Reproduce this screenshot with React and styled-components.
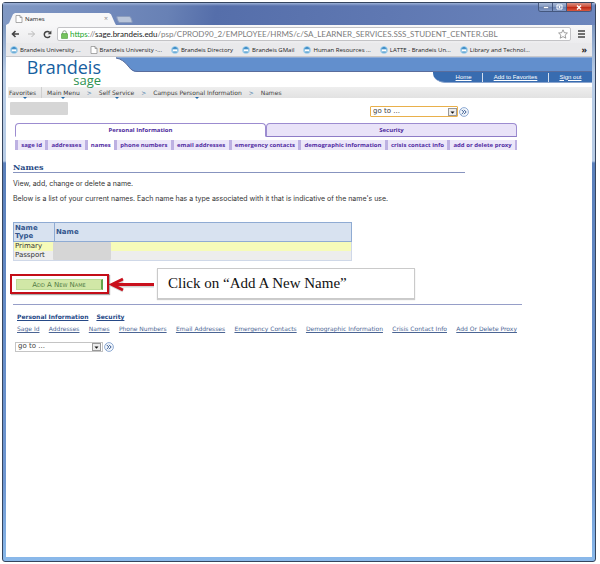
import React from "react";
import styled, { createGlobalStyle, css } from "styled-components";

const GlobalStyle = createGlobalStyle`
  * { box-sizing: border-box; }
  html, body { margin: 0; background: #fff; }
  body { font-family: "DejaVu Sans", Verdana, sans-serif; font-size: 7px; line-height: 9px; color: #333; }
  button, select, input { font: inherit; color: inherit; margin: 0; padding: 0; border: 0; border-radius: 0; background: none; }
  a { color: inherit; }
  svg { display: block; flex: none; }
`;

const Window = styled.div`
  display: flex;
  flex-direction: column;
  min-height: calc(100vh - 4px);
  margin: 2px 4px 2px 2px;
  padding: 0 3px 4px;
  border: 1px solid #35455f;
  border-radius: 3px;
  background: linear-gradient(180deg, #6380ae 0, #b8cce6 70px, #b8cce6 158px, #5b80bb 160px, #6f97d2 480px, #8ab9ea 100%);
`;

const TitleBar = styled.header`
  display: flex;
  align-items: flex-end;
  height: 22px;
  margin: 0 -3px;
  padding: 0 3px;
  background: linear-gradient(180deg, #9db2d8 0, transparent 3px),
    linear-gradient(100deg, #8199c4 0, #7189bb 18%, #6881b5 28%, #556eaa 36%, #5f78b2 65%, #6c86bd 100%);
`;

const BrowserTab = styled.div`
  display: flex;
  align-items: center;
  gap: 2px;
  width: 110px;
  height: 12px;
  padding: 0 8px 0 9px;
  background: #f7f7f8;
  clip-path: polygon(0 100%, 3px 85%, 7px 10%, 9px 0, 103px 0, 105px 10%, 109px 85%, 110px 100%);
  font: 6px/9px "Open Sans", sans-serif;
  color: #222;
`;

const TabClose = styled.button`
  margin-left: auto;
  font-size: 7px;
  line-height: 8px;
  color: #888;
`;

const NewTab = styled.button`
  width: 15px;
  height: 7px;
  margin: 0 0 2px 1px;
  border-radius: 2px;
  transform: skewX(20deg);
  border: 1px solid #8b9cbd;
  background: #b9c5da;
`;

const WindowControls = styled.div`
  display: flex;
  align-self: flex-start;
  width: 54px;
  height: 9px;
  margin-left: auto;
  border: 1px solid #44577e;
  border-top: 0;
  border-radius: 0 0 3px 3px;
  overflow: hidden;
`;

const ControlButton = styled.button`
  display: flex;
  align-items: center;
  justify-content: center;
  flex: ${({ $close }) => ($close ? 25 : 14)};
  border-right: ${({ $close }) => ($close ? 0 : "1px solid #44577e")};
  background: ${({ $close }) =>
    $close
      ? "linear-gradient(#d99184, #cd4a34 50%, #bd2a16 55%, #d8593f)"
      : "linear-gradient(#a9bad7, #7f96bf 50%, #6880b0 55%, #8198c4)"};
`;

const Toolbar = styled.div`
  display: flex;
  align-items: center;
  height: 18px;
  padding: 0 7px 0 5px;
  gap: 7px;
  background: linear-gradient(#f7f7f8, #ececee);
`;

const IconButton = styled.button`
  display: flex;
  align-items: center;
`;

const AddressBar = styled.form`
  display: flex;
  align-items: center;
  flex: 1;
  min-width: 0;
  height: 14px;
  margin-left: -2px;
  padding: 0 2px 0 3px;
  gap: 2px;
  background: #fff;
  border: 1px solid #c3c3c6;
  border-radius: 2px;
`;

const Url = styled.div`
  flex: 1;
  min-width: 0;
  font: 8px/12px Lato, sans-serif;
  white-space: nowrap;
  overflow: hidden;
  color: #7c7c7c;
  & > b { font-weight: 400; color: #222; }
  & > em { font-style: normal; color: #1ba62a; }
`;

const Bookmarks = styled.nav`
  display: flex;
  align-items: center;
  height: 14px;
  padding: 0 5px 0 4px;
  gap: 9px;
  background: #e9e9eb;
  border-bottom: 1px solid #c9c9cc;
  font: 6px/10px "Open Sans", sans-serif;
  color: #222;
`;

const Bookmark = styled.a`
  display: flex;
  align-items: center;
  gap: 2px;
  white-space: nowrap;
  text-decoration: none;
`;

const MoreBookmarks = styled.button`
  margin-left: auto;
  font-size: 9px;
  line-height: 8px;
  font-weight: 700;
`;

const Page = styled.div`
  flex: 1;
  background: #fff;
`;

const PageHeader = styled.div`
  display: flex;
  height: 30px;
`;

const Logo = styled.div`
  display: flex;
  flex-direction: column;
  align-items: flex-end;
  width: 95px;
  flex: none;
  padding-top: 1px;
  font-family: "Open Sans", sans-serif;
  color: #17609f;
  font-size: 18px;
  line-height: 18px;
  & > span { font-size: 13px; line-height: 8px; color: #2e9150; }
`;

const HeaderRight = styled.div`
  display: flex;
  flex-direction: column;
  align-items: flex-end;
  flex: 1;
  min-width: 0;
  margin-left: 15px;
`;

const Band = styled.div`
  display: flex;
  width: 100%;
  height: 15px;
  &::after {
    content: "";
    flex: 1;
    background: #628fcd;
    border-top: 1px solid #8cabd8;
    border-bottom: 1px solid #5a6d9c;
  }
`;

const UserLinks = styled.nav`
  display: flex;
  align-items: center;
  width: 159px;
  height: 11px;
  background: #386cb0;
  border-bottom: 1px solid #8ca6cf;
  border-bottom-left-radius: 12px 10px;
  padding-left: 12px;
  font: 6px/9px "Liberation Sans", Arial, sans-serif;
  color: #fff;
  & > a { flex: 1 1 auto; text-align: center; white-space: nowrap; }
  & > a + a { border-left: 1px solid #d5e0ef; }
`;

const Breadcrumb = styled.nav`
  display: flex;
  align-items: center;
  height: 11px;
  margin-left: 2px;
  padding-left: 1px;
  background: linear-gradient(#eee, #e2e2e2);
  font-size: 6px;
  color: #3c3c3c;
  & > i { font-style: normal; width: 19px; text-align: center; color: #3b74a6; }
`;

const Crumb = styled.button`
  position: relative;
  height: 11px;
  white-space: nowrap;
  ${({ $divided }) => $divided && css`
    padding-right: 5px;
    margin-right: 5px;
    border-right: 1px solid #cfcfcf;
  `}
  ${({ $menu }) => $menu && css`
    &::after {
      content: "";
      position: absolute;
      left: calc(50% - 2px);
      bottom: -1px;
      border: 2px solid transparent;
      border-top-color: #1f68a9;
      border-bottom: 0;
    }
  `}
`;

const TopRow = styled.div`
  display: flex;
  justify-content: space-between;
  height: 25px;
  padding: 4px 123px 0 4px;
`;

const Redacted = styled.div`
  width: 58px;
  height: ${({ $inCell }) => ($inCell ? "18px" : "13px")};
  background: #d6d6d6;
  border-radius: 1px;
  ${({ $inCell }) => $inCell && css`
    position: absolute;
    left: -2px;
    top: 0;
  `}
`;

const GoForm = styled.form`
  display: flex;
  align-items: center;
  gap: 1px;
  height: 11px;
  margin-top: ${({ $active }) => ($active ? "4px" : "0")};
`;

const SelectBox = styled.label`
  display: flex;
  align-items: center;
  width: 88px;
  height: ${({ $active }) => ($active ? "11px" : "10px")};
  padding-left: 2px;
  padding-right: ${({ $active }) => ($active ? "0" : "1px")};
  background: #fff;
  border: 1px solid ${({ $active }) => ($active ? "#e9b04b" : "#c4c4c4")};
  border-radius: ${({ $active }) => ($active ? "1px" : "0")};
  & > select { flex: 1; appearance: none; height: 9px; line-height: 9px; color: #444; outline: 0; }
  & > svg { margin-left: -9px; pointer-events: none; }
`;

const Section = styled.div`
  margin: 0 75px 0 9px;
`;

const TabRow = styled.div`
  display: flex;
`;

const PageTab = styled.button`
  flex: 1;
  height: 14px;
  border: 1px solid #9c8cd0;
  border-bottom-color: ${({ $selected }) => ($selected ? "#fff" : "#8e7cc6")};
  border-radius: 4px 4px 0 0;
  background: ${({ $selected }) => ($selected ? "#fff" : "#e9e3f8")};
  font: 700 6px/10px "Open Sans", sans-serif;
  color: #4d2a9c;
`;

const SubNav = styled.nav`
  display: flex;
  height: 10px;
  margin-top: 3px;
  border-right: 2px solid #bdb1e2;
  font: 700 6px/10px "Open Sans", sans-serif;
  color: #532ea4;
`;

const SubLink = styled.a`
  flex: 1 1 auto;
  border-left: 3px solid #bdb1e2;
  background: ${({ $current }) => ($current ? "#fff" : "#ece7f9")};
  text-align: center;
  text-decoration: none;
  white-space: nowrap;
`;

const Content = styled.main`
  padding: 12px 70px 0 7px;
`;

const Heading = styled.h1`
  margin: 0 57px 0 0;
  border-bottom: 1px solid #8794bf;
  font: 700 8px/10px "DejaVu Serif", serif;
  color: #284b85;
`;

const Text = styled.p`
  margin: 6px 0 0;
  font-family: Inter, sans-serif;
  white-space: nowrap;
`;

const NameTable = styled.table`
  width: calc(100% - 170px);
  margin: 19px 0 0 0;
  border-collapse: collapse;
  table-layout: fixed;
  border: 1px solid #cfd8e8;
  th {
    height: 19px;
    padding: 0 1px;
    border: 1px solid #8fabd3;
    background: #d8e2f0;
    color: #33568d;
    text-align: left;
    line-height: 8px;
  }
  th:first-child { width: 41px; }
  td { position: relative; height: 9px; padding: 0 1px; line-height: 9px; }
`;

const NameRow = styled.tr`
  background: ${({ $current }) => ($current ? "#f6fbb9" : "#ededed")};
`;

const ActionRow = styled.div`
  display: flex;
  align-items: center;
  margin: 7px 0 0 -3px;
`;

const Highlight = styled.div`
  display: flex;
  width: 99px;
  height: 20px;
  padding: 3px 4px 2px;
  border: 2px solid #c40d18;
  box-shadow: 1px 1px 1px #aaa;
`;

const AddButton = styled.button`
  flex: 1;
  border: 1px solid #bddb97;
  border-right: 2px solid #63a64b;
  background: #d1e7a7;
  color: #527b45;
  font-size: 7px;
  line-height: 10px;
  font-variant: small-caps;
`;

const Callout = styled.div`
  flex: 0 1 258px;
  height: 31px;
  padding-left: 10px;
  border: 1px solid #cacaca;
  box-shadow: 0 1px 1px #ccc;
  background: #fff;
  font: 15px/28px "Liberation Serif", Cambria, serif;
  color: #111;
  white-space: nowrap;
`;

const Footer = styled.footer`
  display: flex;
  flex-direction: column;
  gap: 3px;
  margin-top: 5px;
  padding: 7px 5px 0 4px;
  border-top: 1px solid #969ec8;
  color: #4b6594;
  & > form { margin: 5px 0 0 -2px; }
`;

const LinkRow = styled.nav`
  display: flex;
  justify-content: ${({ $strong }) => ($strong ? "flex-start" : "space-between")};
  gap: ${({ $strong }) => ($strong ? "8px" : "0")};
  font-size: 6px;
  font-weight: ${({ $strong }) => ($strong ? 700 : 400)};
  color: ${({ $strong }) => ($strong ? "#264987" : "#4b6594")};
  white-space: nowrap;
`;

const PageIcon = () => (
  <svg width="8" height="8" viewBox="0 0 8 8">
    <path d="M1 .5h4l2 2v5H1zM5 .5v2h2" fill="#fff" stroke="#888" strokeWidth=".7" />
  </svg>
);

const SealIcon = () => (
  <svg width="8" height="8" viewBox="0 0 8 8">
    <circle cx="4" cy="4" r="3.8" fill="#9acbe9" />
    <path d="M1.5 2.8h5M2.4 1.8h3.2M4 .8v1" stroke="#2f82c0" strokeWidth="1" />
    <rect x="2" y="3.5" width="4" height="2" fill="#fff" />
    <path d="M2.2 6h3.6" stroke="#2d83bd" strokeWidth=".8" />
  </svg>
);

const ArrowIcon = ({ forward }) => (
  <svg width="9" height="8" viewBox="0 0 9 8">
    <path
      d={forward ? "M1 4h6.5M4.5 1l3 3-3 3" : "M8 4H1.5M4.5 1l-3 3 3 3"}
      fill="none"
      stroke={forward ? "#b9b9b9" : "#444"}
      strokeWidth={forward ? 1 : 1.6}
    />
  </svg>
);

const bookmarks = [
  ["Brandeis University ...", SealIcon],
  ["Brandeis University -...", PageIcon],
  ["Brandeis Directory", SealIcon],
  ["Brandeis GMail", SealIcon],
  ["Human Resources ...", SealIcon],
  ["LATTE - Brandeis Un...", SealIcon],
  ["Library and Technol...", SealIcon],
];

const subLinks = [
  "sage id", "addresses", "names", "phone numbers", "email addresses",
  "emergency contacts", "demographic information", "crisis contact info", "add or delete proxy",
];

const footerLinks = [
  "Sage Id", "Addresses", "Names", "Phone Numbers", "Email Addresses",
  "Emergency Contacts", "Demographic Information", "Crisis Contact Info", "Add Or Delete Proxy",
];

function GoTo({ active }) {
  return (
    <GoForm $active={active} onSubmit={(e) => e.preventDefault()}>
      <SelectBox $active={active}>
        <select aria-label="Go to" defaultValue="go to ...">
          <option>go to ...</option>
        </select>
        <svg width="9" height="8" viewBox="0 0 9 8">
          <rect x=".5" y=".5" width="8" height="7" fill="#ececec" stroke="#999" />
          <path d="M2.5 3.5h4l-2 2.2z" fill="#111" />
        </svg>
      </SelectBox>
      <IconButton aria-label="Go">
        <svg width="10" height="10" viewBox="0 0 10 10">
          <circle cx="5" cy="5" r="4.4" fill="#f4f8fd" stroke="#7597c8" strokeWidth=".8" />
          <path d="M2.6 2.8 4.8 5 2.6 7.2M5 2.8 7.2 5 5 7.2" fill="none" stroke="#34578f" />
        </svg>
      </IconButton>
    </GoForm>
  );
}

export default function App() {
  return (
    <>
      <GlobalStyle />
      <Window>
        <TitleBar>
          <BrowserTab>
            <PageIcon />
            Names
            <TabClose aria-label="Close tab">×</TabClose>
          </BrowserTab>
          <NewTab aria-label="New tab" />
          <WindowControls>
            <ControlButton aria-label="Minimize">
              <svg width="6" height="3"><path d="M.5 .5h5v2h-5z" fill="#fff" stroke="#53658a" strokeWidth=".5" /></svg>
            </ControlButton>
            <ControlButton aria-label="Restore">
              <svg width="7" height="6"><path d="M1 1h5v4H1zM3 2.5h1v1H3z" fill="none" stroke="#fff" /></svg>
            </ControlButton>
            <ControlButton $close aria-label="Close">
              <svg width="6" height="5"><path d="M1 .5l4 4M5 .5l-4 4" stroke="#fff" strokeWidth="1.4" /></svg>
            </ControlButton>
          </WindowControls>
        </TitleBar>
        <Toolbar>
          <IconButton aria-label="Back"><ArrowIcon /></IconButton>
          <IconButton aria-label="Forward"><ArrowIcon forward /></IconButton>
          <IconButton aria-label="Reload">
            <svg width="9" height="9" viewBox="0 0 9 9">
              <path d="M7 6.2A3.1 3.1 0 1 1 6.7 2.4" fill="none" stroke="#444" strokeWidth="1.5" />
              <path d="M8.4.5v3.7H4.7z" fill="#444" />
            </svg>
          </IconButton>
          <AddressBar onSubmit={(e) => e.preventDefault()}>
            <svg width="7" height="9" viewBox="0 0 7 9">
              <path d="M1.7 4V2.6a1.8 1.8 0 0 1 3.6 0V4" fill="none" stroke="#8b9c86" />
              <rect x=".4" y="3.6" width="6.2" height="5" rx=".6" fill="#77c35f" stroke="#4c9a3b" strokeWidth=".6" />
            </svg>
            <Url>
              <em>https</em>://<b>sage.brandeis.edu</b>/psp/CPROD90_2/EMPLOYEE/HRMS/c/SA_LEARNER_SERVICES.SSS_STUDENT_CENTER.GBL
            </Url>
            <IconButton aria-label="Bookmark this page">
              <svg width="10" height="10" viewBox="0 0 10 10">
                <path d="M5 .8 6.3 3.7l3.1.3-2.3 2.1.7 3.1L5 7.6 2.2 9.2l.7-3.1L.6 4l3.1-.3z" fill="#fff" stroke="#777" strokeWidth=".7" />
              </svg>
            </IconButton>
          </AddressBar>
          <IconButton aria-label="Menu">
            <svg width="7" height="8"><path d="M0 1h7M0 4h7M0 7h7" stroke="#444" strokeWidth="1.6" /></svg>
          </IconButton>
        </Toolbar>
        <Bookmarks>
          {bookmarks.map(([label, Icon]) => (
            <Bookmark key={label} href="#"><Icon />{label}</Bookmark>
          ))}
          <MoreBookmarks aria-label="More bookmarks">»</MoreBookmarks>
        </Bookmarks>
        <Page>
          <PageHeader>
            <Logo>Brandeis<span>sage</span></Logo>
            <HeaderRight>
              <Band>
                <svg width="22" height="15" viewBox="0 0 22 15">
                  <path d="M0 0h22v15h-1Q16 15 13 10 7 2 0 1z" fill="#628fcd" />
                  <path d="M0 .5h22" stroke="#8cabd8" />
                  <path d="M0 1Q7 2 13 10q3 4.5 9 4.5" fill="none" stroke="#5a6d9c" />
                </svg>
              </Band>
              <UserLinks>
                <a href="#">Home</a>
                <a href="#">Add to Favorites</a>
                <a href="#">Sign out</a>
              </UserLinks>
            </HeaderRight>
          </PageHeader>
          <Breadcrumb>
            <Crumb $divided $menu>Favorites</Crumb>
            <Crumb $menu>Main Menu</Crumb><i>&gt;</i>
            <Crumb $menu>Self Service</Crumb><i>&gt;</i>
            <Crumb $menu>Campus Personal Information</Crumb><i>&gt;</i>
            <Crumb>Names</Crumb>
          </Breadcrumb>
          <TopRow>
            <Redacted />
            <GoTo active />
          </TopRow>
          <Section>
            <TabRow>
              <PageTab $selected>Personal Information</PageTab>
              <PageTab>Security</PageTab>
            </TabRow>
            <SubNav>
              {subLinks.map((label) => (
                <SubLink key={label} href="#" $current={label === "names"}>{label}</SubLink>
              ))}
            </SubNav>
          </Section>
          <Content>
            <Heading>Names</Heading>
            <Text>View, add, change or delete a name.</Text>
            <Text>Below is a list of your current names. Each name has a type associated with it that is indicative of the name's use.</Text>
            <NameTable>
              <thead>
                <tr><th scope="col">Name Type</th><th scope="col">Name</th></tr>
              </thead>
              <tbody>
                <NameRow $current><td>Primary</td><td><Redacted $inCell /></td></NameRow>
                <NameRow><td>Passport</td><td /></NameRow>
              </tbody>
            </NameTable>
            <ActionRow>
              <Highlight><AddButton>Add A New Name</AddButton></Highlight>
              <svg width="48" height="18" viewBox="0 0 48 18">
                <path d="M4 11h41M14 6 4 11l10 5" fill="none" stroke="#aaa" strokeWidth="3" opacity=".5" />
                <path d="M3 9.5h42" stroke="#c9101c" strokeWidth="3" />
                <path d="M14 4 3 9.5l11 5.5" fill="none" stroke="#c9101c" strokeWidth="3" />
              </svg>
              <Callout>Click on “Add A New Name”</Callout>
            </ActionRow>
            <Footer>
              <LinkRow $strong>
                <a href="#">Personal Information</a>
                <a href="#">Security</a>
              </LinkRow>
              <LinkRow>
                {footerLinks.map((label) => <a key={label} href="#">{label}</a>)}
              </LinkRow>
              <GoTo />
            </Footer>
          </Content>
        </Page>
      </Window>
    </>
  );
}
